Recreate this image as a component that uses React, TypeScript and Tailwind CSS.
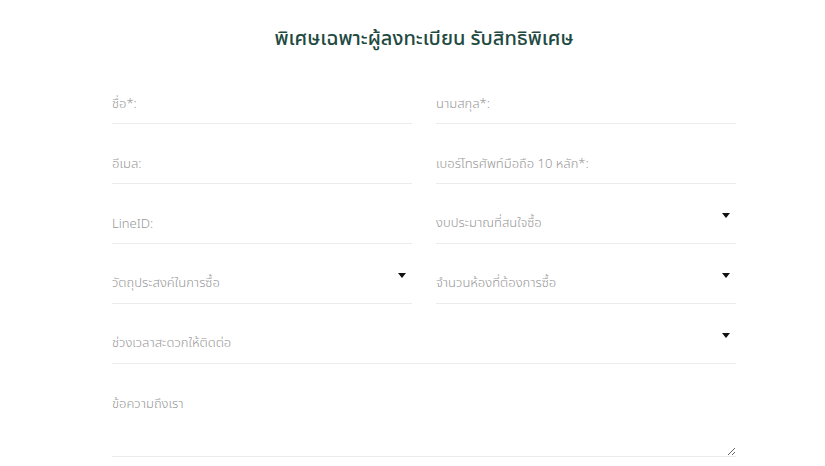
import React from 'react';

const fieldBase =
    'h-10 w-full border-0 border-b border-[#ececec] bg-transparent px-0 text-[13px] font-light outline-none placeholder:text-[#979797]';

const Caret: React.FC = () => (
    <svg className="pointer-events-none absolute right-[6px] top-[9px]" width="8" height="5" viewBox="0 0 8 5">
        <path d="M0 0h8L4 5z" fill="#111" />
    </svg>
);

const TextField: React.FC<{ label: string }> = ({ label }) => (
    <input type="text" placeholder={label} className={`${fieldBase} text-[#555]`} />
);

const SelectField: React.FC<{ label: string }> = ({ label }) => (
    <div className="relative">
        <select defaultValue="" className={`${fieldBase} appearance-none text-[#979797]`}>
            <option value="" disabled>
                {label}
            </option>
        </select>
        <Caret />
    </div>
);

export default function App() {
    return (
        <div
            className="min-h-[466px] w-full bg-white pt-[25px]"
            style={{ fontFamily: '"Noto Sans Thai", "Noto Sans", "DejaVu Sans", sans-serif' }}
        >
            <div className="ml-[112px] w-[624px]">
                <h2 className="text-center text-[20px] font-medium leading-[28px] text-[#1f4a42]">
                    พิเศษเฉพาะผู้ลงทะเบียน รับสิทธิพิเศษ
                </h2>

                <form className="mt-[31px] grid grid-cols-2 gap-x-6 gap-y-5">
                    <TextField label="ชื่อ*:" />
                    <TextField label="นามสกุล*:" />
                    <TextField label="อีเมล:" />
                    <TextField label="เบอร์โทรศัพท์มือถือ 10 หลัก*:" />
                    <TextField label="LineID:" />
                    <SelectField label="งบประมาณที่สนใจซื้อ" />
                    <SelectField label="วัตถุประสงค์ในการซื้อ" />
                    <SelectField label="จำนวนห้องที่ต้องการซื้อ" />
                    <div className="col-span-2">
                        <SelectField label="ช่วงเวลาสะดวกให้ติดต่อ" />
                    </div>
                    <textarea
                        placeholder="ข้อความถึงเรา"
                        className="col-span-2 h-[73px] w-full resize-y border-0 border-b border-[#ececec] bg-transparent px-0 pt-[10px] text-[13px] font-light leading-[20px] text-[#555] outline-none placeholder:text-[#979797]"
                    />
                </form>
            </div>
        </div>
    );
}
